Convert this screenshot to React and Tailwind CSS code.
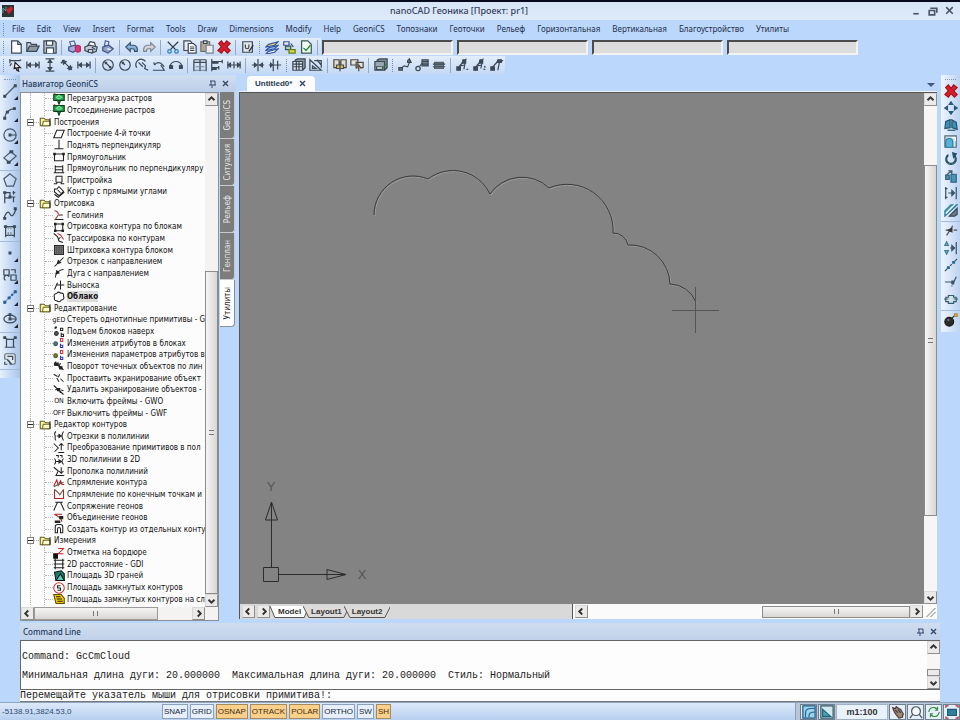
import React, { useState } from 'react';

const INK = '#3d4957';

// every glyph is a list of [path, stroke, fill] on a 16x16 grid
const GLYPHS = {
  // standard toolbar
  newFile: [['M3 1h7l4 4v10H3z', INK, '#fafcff'], ['M10 1v4h4']],
  open: [['M1 13V3h4l1 2h6v2', INK, '#cfd6dd'], ['M1 13l3-6h11l-3 6z', INK, '#8f9aa5']],
  save: [['M1 1h12l2 2v12H1z', INK, '#b9c4cf'], ['M4 1h7v5H4z', INK, '#fff'], ['M4 15V9h8v6', INK, '#fff']],
  print: [['M3 2l5-1 2 5-5 2z', '#4d68a5', '#dfe8f7'], ['M2 8l7-2 4 4-6 4-5-2z', '#3f4f8a', '#9fb2dd'], ['M10 10a3 2.500 0 1 0 5 0a3 2.500 0 1 0-5 0', '#c0275e', '#d63a72']],
  preview: [['M4 7l3-5 5 1 1 4', INK, '#fff'], ['M1 8l5-2 9 2-1 5-5 2-8-3z', INK, '#c3ccd6'], ['M5 11h5v3H5z', INK, '#fff'], ['M9 8l4 3', INK]],
  plot: [['M5 1l4 1-1 5-4-1z', '#4d68a5', '#dfe8f7'], ['M2 8l7-2 5 4-6 5-6-3z', '#45557f', '#8ea3cc'], ['M7 10l4 1', '#fff']],
  undo: [['M1 8l5-5v3h4q5 1 4 7h-3q0-3-2-3H6v3z', '#34506e', '#8db4d8']],
  redo: [['M15 8l-5-5v3H6q-5 1-4 7h3q0-3 2-3h3v3z', '#7d8791', '#d5d3d6']],
  cut: [['M2 2l9 9M14 2l-9 9', '#2f3b46'], ['M2 13a2 2 0 1 0 4 0a2 2 0 1 0-4 0M10 13a2 2 0 1 0 4 0a2 2 0 1 0-4 0', '#2b7fc0']],
  copy: [['M1 1h7l2 2v9H1z', INK, '#e8edf2'], ['M6 4h6l3 3v8H6z', INK, '#fff'], ['M8 8h5M8 10h5M8 12h5']],
  paste: [['M1 2h10v11H1z', '#6b6f73', '#b2a796'], ['M4 1h4v3H4z', INK, '#ddd'], ['M7 6h8v9H7z', '#7b8289', '#e9edf0']],
  del: [['M2 4l3-3 3 4 3-4 4 3-4 4 4 4-3 3-4-4-3 4-4-3 4-4z', '#a8101c', '#d5202c']],
  props: [['M2 2h11v12H2z', INK, '#e4e9ef'], ['M5 5v3q0 2 2 2t2-2V5'], ['M14 6l-5 7', '#222']],
  layers: [['M4 5l11-3-4 4-10 2z', '#3056a8', '#f4d94e'], ['M4 9l11-3-4 4-10 2z', '#3056a8', '#9fc0f0'], ['M4 13l11-3-4 4-10 2z', '#3056a8', '#fff']],
  layerSet: [['M2 2h6v4H2z', '#33508c', '#e8effa'], ['M4 7h6v4H4z', '#33508c', '#b8d47a'], ['M8 11h7v4H8z', '#5d7d1e', '#e6dd3d'], ['M10 4l3 4', INK]],
  checkFile: [['M3 1h7l4 4v10H3z', '#365a4a', '#f5fbf5'], ['M5 9l3 3 5-6', '#168a3a']],

  // dimension toolbar
  dimPick: [['M1 3h7M1 1v5M8 3h4l2-1M3 6l-2 3'], ['M7 5l6 6h-3l1 4-2-1-1-3-2 1z', '#222', '#fff']],
  dimLin: [['M1 4v8M15 4v8M2 8h12'], ['M2 8l3-2v4zM14 8l-3-2v4z', INK, INK]],
  dimVert: [['M3 1h10M3 15h10M8 2v12'], ['M6 5l2-3 2 3zM6 11l2 3 2-3z', INK, INK]],
  dimAlign: [['M3 3l10 10M1 6l4-4M10 14l4-4'], ['M3 3l4 1-3 3zM13 13l-4-1 3-3z', INK, INK]],
  dimDia: [['M2 8a6 6 0 1 0 12 0a6 6 0 1 0-12 0M4 4l8 8M5 7V5h2M11 9v2H9']],
  dimRad: [['M2 8a6 6 0 1 0 12 0a6 6 0 1 0-12 0M8 8l-4-4M5 7V5h2']],
  dimJog: [['M2 11a6 6 0 0 1 10-7M4 5l5 5M8 5l4 4-1 3 4 2']],
  dimAng: [['M3 8a5 5 0 0 1 9 0l2 2M1 14h13L10 8M3 8l-1-3']],
  dimArc: [['M1 12v-3q2-5 7-5t7 5v3M3 8l-2 3M12 8l3 3'], ['M1 9h3v3H1zM12 9h3v3h-3z', INK, INK]],
  dimOrd: [['M1 2v13M8 2v13M15 2v13M1 2h14M1 5h14', INK], ['M3 10h10M1 14h14', '#77828d']],
  dimBase: [['M2 1v14M2 4h12M2 11h8M14 2v4M10 9v4'], ['M3 4h6v2H3zM3 11h4v2H3z', INK, INK]],
  dimCont: [['M1 4v8M8 4v8M15 4v8M1 8h14'], ['M1 8l3-2v4zM15 8l-3-2v4z', INK, INK]],
  dimSpace: [['M8 1v14M1 8h6M9 8h6'], ['M4 6l3 2-3 2zM13 6l-3 2 3 2z', INK, INK]],
  dimBreak: [['M6 1v14M11 3v10M1 8h14'], ['M3 6l2 2-2 2z', INK, INK]],
  table: [['M3 3l3-2h9v10l-3 3', INK, '#8c97a3'], ['M1 4h11v10H1z', INK, '#dfe5eb'], ['M1 7h11M1 10h11M5 4v10M8 4v10']],
  ruler: [['M1 2v12h13z'], ['M4 9v3h4zM9 2l5 6M6 3h8v8']],
  blockIn: [['M1 2h6v9H1zM9 2h6v9H9z', '#4d4a42', '#e2ded0'], ['M4 8h8v4H4z', '#4d4a42', '#d5c370'], ['M8 4v11']],
  blockOut: [['M1 2h8v6H1zM7 5h8v6H7z', '#4d4a42', '#e6e4da'], ['M10 8v7M7 12l3-4 3 4', '#4d4a42', '#d5c370']],
  tableEdit: [['M3 3l3-2h9v10l-3 3', INK, '#7c8894'], ['M1 4h11v10H1z', INK, '#9aa6b2'], ['M3 10h7v3H3z', INK, '#e8edf2'], ['M14 7l-5 6', '#3c7c3c']],
  geoA: [['M2 13l5-4 4 1 3-7'], ['M1 11h4v3H1zM11 3l2-2 2 4h-4z', INK, '#6b7580']],
  geoB: [['M1 12a2 2 0 1 0 5 0a2 2 0 1 0-5 0M5 10l3-4'], ['M8 2h7v7H8z', INK, '#7a838d'], ['M8 4h7M8 7h7']],
  geoC: [['M3 5h10v7H3z', '#5a636d', '#737b84'], ['M1 7h14M1 10h14']],
  geoD: [['M2 13l3-5 6-6-2 11M5 9l5-1M12 13h2'], ['M1 10h4v4H1zM8 2h3v4H7z', INK, INK]],
  geoE: [['M2 13l3-5 6-6-2 10M5 9l5-1M12 13h2M13 9l1 2'], ['M1 10h4v4H1zM8 2h3v4H7z', INK, INK]],
  geoF: [['M2 13l3-5 5-5h5M11 3l-2 11'], ['M1 10h4v4H1zM9 2h4v3H8z', INK, INK]],

  // draw toolbar
  line: [['M2 14L14 2', '#4a5968'], ['M1 13h2v2H1zM13 1h2v2h-2z', INK, INK]],
  arc: [['M2 14Q3 4 13 3', '#4a5968'], ['M1 13h2v2H1zM4 6h2v2H4zM12 2h2v2h-2z', INK, INK]],
  circle: [['M1 8a7 7 0 1 0 14 0a7 7 0 1 0-14 0', '#4a5968'], ['M8 8h7M7 7h2v2H7z', INK, INK]],
  rect: [['M1 9l8-7 6 5-8 7z', '#4a5968'], ['M5 13h3v2H5zM8 1h3v2H8z', INK, INK]],
  polygon: [['M8 1l7 5.500-3 8.500H4L1 6.500z', '#4a5968']],
  pline: [['M2 15V3h6v5h6M2 9h6M11 3h3M12 1v4M12 8v6'], ['M1 2h2v2H1zM7 7h2v2H7z', INK, INK]],
  spline: [['M1 13q4-11 7-5t7-6'], ['M1 12h2v2H1zM13 1h2v2h-2z', INK, INK]],
  hatch: [['M3 3h10v10H3zM1 3h2M13 3h2M3 13v2M13 13v2', INK], ['M6 3v3M9 3v3M6 9v4M9 9v4', '#7b8793'], ['M2 2h2v2H2zM12 2h2v2h-2z', INK, INK]],
  point: [['M7 7h2v2H7z', INK, INK]],
  region: [['M1 2h6v6H1zM9 8h6v6H9zM3 14a3 3 0 1 1 4-4M9 2h5v4']],
  divide: [['M2 14L14 2', '#7fa3c8'], ['M1 13h2v2H1zM6 8h2v2H6zM13 1h2v2h-2zM10 5h1v1h-1z', '#2f5c8c', '#2f5c8c']],
  ellipse: [['M1 8a7 4.500 0 1 0 14 0a7 4.500 0 1 0-14 0M8 3v5h7'], ['M7 2h2v2H7zM7 7h2v2H7z', INK, INK]],
  wipe: [['M2 3l3 2h7l2-2M4 5v9M12 5v9M2 14h12'], ['M1 2h2v2H1zM13 2h2v2h-2z', INK, INK]],
  boundary: [['M2 4q0-2 2-2h8q2 0 2 2v8q0 2-2 2H8q0-6-6-6z', '#65727f', '#dfe7ee'], ['M5 5h6v4M2 11v3h3M5 9l5 5']],

  // modify toolbar
  move: [['M8 1l-2 3h4zM8 15l-2-3h4zM1 8l3-2v4zM15 8l-3-2v4z', '#245a78', '#245a78']],
  mirror: [['M1 12l1-8 5-2v9zM9 11V2l5 3 1 8z', '#22566e', '#3b93b5'], ['M4 14h9', '#22566e']],
  scale: [['M1 1h13v13H1z', '#5c6b78', '#cfe4ee'], ['M2 14V8q0-4 4-4t4 4v6z', '#2a81a8', '#55b4d6'], ['M9 3h4v4', '#fff']],
  rotate: [['M5 3a6 6 0 1 0 6 0', '#244c63'], ['M5 4a5 5 0 1 0 6 0', '#244c63'], ['M10 1l4 1-3 4z', '#244c63', '#244c63']],
  array: [['M2 8l5-5 4 4M5 2h4v4', '#3c5566'], ['M2 7h4v5H2zM8 6h6v9H8z', '#2c6684', '#4c93b4']],
  stretch: [['M2 1v14M14 1v14M1 3h3M1 13h3M5 8h6', '#3a5566'], ['M9 5l3 3-3 3z', '#3a5566', '#3a5566']],
  offset: [['M1 9l7-7h7L1 15z', '#2c7c9c', '#4da9c8'], ['M6 15l9-9v7l-3 2z', '#3b4a56', '#6d7d8b'], ['M2 12L13 1', '#fff']],
  trim: [['M3 13l7-11M2 7h6M11 7h4', '#47515b'], ['M5 7l4-2v4z', '#333', '#333']],
  extend: [['M14 1v14M7 8h5', '#3a5566'], ['M3 1l-2 4h4zM3 15l-2-4h4z', '#3a7f9c', '#9cc6d8'], ['M9 5l3 3-3 3z', '#3a5566', '#3a5566']],
  brk: [['M1 15l4-4M7 9l2-2M11 5l4-4', '#47515b'], ['M4 10h2v2H4zM10 4h2v2h-2z', '#2b6d92', '#2b6d92']],
  join: [['M1 8h9M10 11l4-9M9 12v1', '#3a5566'], ['M9 7h2v3H9z', '#3a5566', '#3a5566']],
  explodeBox: [['M2 6h3V4h6v2h3v5h-3v2H5v-2H2zM0 8h5M11 8h5', '#3a5f72', '#cfe2ea']],
  bomb: [['M1 10a5 5 0 1 0 10 0a5 5 0 1 0-10 0', '#1c1c1c', '#2a2a2a'], ['M9 6l3-3', '#333'], ['M12 1h3v3h-3z', '#b08a3c', '#e0b95a'], ['M4 8h2', '#bbb']],

  // tree
  raster: [['M1 2h14v8H1z', '#0c3d18', '#1f9a4b'], ['M4 6l4-3 4 3-4 2z', '#7be08f', '#3fc46a'], ['M6 10h4l-2 5z', '#0c3d18', '#1f9a4b'], ['M1 1h2', '#c33']],
  folder: [['M1 13V3h5l2 2h5v8z', '#5f5a1e', '#fdf6a8'], ['M4 13l1-6h9v6z', '#6d6824', '#fffbcc'], ['M14 3v10', '#222']],
  para: [['M1 13L5 3h10l-4 10z', '#222']],
  perp: [['M8 1v12M2 13h12', '#222']],
  rectangle: [['M2 4h12v9H2z', '#222'], ['M1 3h2v2H1zM13 3h2v2h-2z', '#222', '#222']],
  rectPerp: [['M3 3v10M13 3v10M3 5h10M1 13h14M3 9h10', '#222']],
  annex: [['M4 3h8v8M4 3v8M1 13h4v-2h6v2h4', '#222']],
  angles: [['M2 4h3l3-3 6 6-6 6-6-5zM2 11l5 4 8-7', '#222'], ['M6 5l4 4', '#222']],
  geoline: [['M2 14h12M8 8h5', '#222'], ['M2 2q6 2 5 6l-4 6', '#a33']],
  outline: [['M3 4h10v9H3z', '#222'], ['M2 3h2v2H2zM12 3h2v2h-2zM2 12h2v2H2zM12 12h2v2h-2z', '#222', '#222']],
  trace: [['M1 2l5 4 2 6 5 2M7 10l3-3', '#222'], ['M6 2l4 2 4 6', '#c33']],
  fill: [['M2 2h12v12H2z', '#222', '#888'], ['M2 5h12M2 8h12M2 11h12M5 2v12M8 2v12M11 2v12', '#555']],
  segDir: [['M2 14L14 2', '#222'], ['M6 10l1-4 3 3z', '#222', '#222']],
  arcDir: [['M3 14Q4 5 14 3', '#222'], ['M4 9l1-4 3 3z', '#222', '#222']],
  leader: [['M2 14l4-9M4 8h11M10 2v12', '#222']],
  cloud: [['M5 3q3-3 5 0 5-1 4 4 2 4-3 5-2 4-6 1-4 0-3-4-2-5 3-6z', '#222']],
  raise: [['M3 1v3M2 3l2-2 1 2', '#222'], ['M2 10a2 2 0 1 0 5 0a2 2 0 1 0-5 0', '#333', '#555'], ['M10 3h3v3h-3zM11 9v5h3v-3h-3', '#222']],
  attr: [['M1 9a2 2 0 1 0 5 0a2 2 0 1 0-5 0', '#356', '#567b6b'], ['M10 2h3v4h-3z', '#c34'], ['M10 9v5h3v-3h-3', '#33a']],
  attrP: [['M1 9a2 2 0 1 0 5 0a2 2 0 1 0-5 0', '#552', '#77812c'], ['M10 2h3v4h-3z', '#c34'], ['M10 9v5h3v-3h-3', '#33a']],
  turn: [['M4 2l-2 4 6 2 6 5M8 8l2-4', '#222'], ['M2 4h5v3H2zM8 9h4v3H9z', '#222', '#222']],
  screenOn: [['M1 3l5 3M5 8l3 5M9 3l-2 4M10 9l4 4', '#222']],
  screenOff: [['M1 2l13 12M3 8l4-2M8 6l2 6M11 8l3 1', '#222'], ['M6 6h3v3H6z', '#222', '#222']],
  segs: [['M4 2Q1 4 3 8q-1 4 1 6M14 2q-4 6 0 12M5 8h5', '#222'], ['M8 6l3 2-3 2z', '#222', '#222']],
  convert: [['M1 2l6 6-5 5M7 14h8M11 3v8M8 5l3-3 3 3', '#222']],
  to2d: [['M2 6q3 4 0 8M14 6q-4 4 0 8M4 10h7M4 2h3v3M9 2h3v3', '#222'], ['M8 8l3 2-3 2z', '#222', '#222']],
  weed: [['M1 3l6 5-3 6h11M11 3v8M8 8l3 3 3-3', '#222']],
  straight: [['M1 12l4-8 2 7 3-6 2 5h3', '#b22'], ['M1 13L14 7', '#555']],
  straight2: [['M2 2v12h12V2', '#b22'], ['M2 2l5 4 2 3 5-7', '#555']],
  mate: [['M1 14L6 3h4l5 11M3 3h3M10 3h3', '#222']],
  merge: [['M2 3h10M2 3l8 5 2 5', '#b22'], ['M9 6h4v3H9zM3 12h6v2H3z', '#222', '#222']],
  contour: [['M3 13V5q0-3 3-3h4q3 0 3 3v8h-3V8q0-2-2-2T6 8v5z', '#222']],
  mark: [['M1 9h5v6H1z', '#111', '#111'], ['M7 2h7L7 9h7', '#c22']],
  dist: [['M3 1v14M13 1v14M1 3h14M1 8h14M1 13h14', '#222']],
  faces: [['M2 3l9-2 4 4v9H4z', '#111', '#17806f'], ['M4 14l6-9 5 9z', '#111', '#4fd0c0']],
  area: [['M1 8a7 7 0 1 0 14 0a7 7 0 1 0-14 0', '#c33', '#fff'], ['M10 5H6v3h4v3H6', '#222']],
  areaLayer: [['M1 2h10l4 5v7H4z', '#5a4c05', '#f0c808'], ['M4 5h6M5 8h7M6 11h7', '#222']],

  // status bar
  viewA: [['M1 1h14v14H1z', '#1d5878', '#9fd3ec'], ['M4 14V9q0-5 6-5h5M8 14v-2q0-4 7-4', '#1d6a94']],
  viewB: [['M1 1h14v14H1z', '#2f5566', '#d3e8ee'], ['M3 13V5l9 8z', '#1f6578', '#4ba3b8']],
  hand: [['M3 6L2 3l3 1 1-2 3 2 2 1 3 5-1 4-4 1-4-5z', '#4f4038', '#9c8678'], ['M5 6l3 3M8 5l3 4', '#4f4038']],
  lens: [['M3 7a5 5 0 1 0 10 0a5 5 0 1 0-10 0M12 11l3 4M4 11l-3 4', '#4b565c', '#f4f8fa']],
  regen: [['M2 8q1-6 7-5l3 2M14 8q-1 6-7 5l-3-2M12 2v4H9M4 14v-4h3', '#3a8a4c']],
  extents: [['M3 5h10v7H3z', '#1f5c78', '#2d7f9f'], ['M1 3V1h3M12 1h3v2M1 13v2h3M12 15h3v-2', '#a33']],
};

const Glyph = ({ name, className = 'w-[14px] h-[14px]' }) => (
  <svg viewBox="0 0 16 16" className={`${className} shrink-0`} aria-hidden="true">
    {GLYPHS[name].map(([d, stroke, fill], i) => (
      <path key={i} d={d} stroke={stroke || INK} fill={fill || 'none'} strokeWidth="1.4" />
    ))}
  </svg>
);

const MENU = ['File', 'Edit', 'View', 'Insert', 'Format', 'Tools', 'Draw', 'Dimensions', 'Modify', 'Help', 'GeoniCS', 'Топознаки', 'Геоточки', 'Рельеф', 'Горизонтальная', 'Вертикальная', 'Благоустройство', 'Утилиты'];

// "|" is a separator, ":" starts the next toolbar
const STANDARD_BAR = ['newFile', 'open', 'save', '|', 'print', 'preview', 'plot', '|', 'undo', 'redo', '|', 'cut', 'copy', 'paste', 'del', '|', 'props', ':', 'layers', 'layerSet', 'checkFile', '|'];
const DIM_BAR = ['dimPick', 'dimLin', 'dimVert', 'dimAlign', 'dimLin', '|', 'dimDia', 'dimRad', 'dimJog', 'dimAng', 'dimArc', '|', 'dimOrd', 'dimBase', 'dimCont', '|', 'dimSpace', 'dimBreak', ':', 'table', 'ruler', '|', 'blockIn', 'blockOut', '|', 'tableEdit', ':', 'geoA', 'geoB', 'geoC', '|', 'geoD', 'geoE', 'geoF'];
const MODIFY_BAR = ['del', 'move', 'mirror', 'scale', 'rotate', 'array', 'stretch', 'offset', '|', 'trim', 'extend', 'brk', 'join', 'explodeBox', '|', 'bomb'];
const DRAW_BAR = [
  { flyout: true, items: ['line', 'arc', 'circle', 'rect'] },
  { flyout: false, items: ['polygon', 'pline', 'spline', 'hatch'] },
  { flyout: true, items: ['point', 'region', 'divide', 'ellipse'] },
  { flyout: false, items: ['wipe', 'boundary'] },
];

const TREE = [
  { items: [['raster', 'Перезагрузка растров'], ['raster', 'Отсоединение растров']] },
  {
    title: 'Построения',
    items: [['para', 'Построение 4-й точки'], ['perp', 'Поднять перпендикуляр'], ['rectangle', 'Прямоугольник'], ['rectPerp', 'Прямоугольник по перпендикуляру'], ['annex', 'Пристройка'], ['angles', 'Контур с прямыми углами']],
  },
  {
    title: 'Отрисовка',
    items: [['geoline', 'Геолиния'], ['outline', 'Отрисовка контура по блокам'], ['trace', 'Трассировка по контурам'], ['fill', 'Штриховка контура блоком'], ['segDir', 'Отрезок с направлением'], ['arcDir', 'Дуга с направлением'], ['leader', 'Выноска'], ['cloud', 'Облако']],
  },
  {
    title: 'Редактирование',
    items: [['gED', 'Стереть однотипные примитивы - G'], ['raise', 'Подъем блоков наверх'], ['attr', 'Изменения атрибутов в блоках'], ['attrP', 'Изменения параметров атрибутов в'], ['turn', 'Поворот точечных объектов по лин'], ['screenOn', 'Проставить экранирование объект'], ['screenOff', 'Удалить экранирование объектов -'], ['ON', 'Включить фреймы - GWO'], ['OFF', 'Выключить фреймы - GWF']],
  },
  {
    title: 'Редактор контуров',
    items: [['segs', 'Отрезки в полилинии'], ['convert', 'Преобразование примитивов в пол'], ['to2d', '3D полилинии в 2D'], ['weed', 'Прополка полилиний'], ['straight', 'Спрямление контура'], ['straight2', 'Спрямление по конечным точкам и'], ['mate', 'Сопряжение геонов'], ['merge', 'Объединение геонов'], ['contour', 'Создать контур из отдельных конту']],
  },
  {
    title: 'Измерения',
    items: [['mark', 'Отметка на бордюре'], ['dist', '2D расстояние - GDI'], ['faces', 'Площадь 3D граней'], ['area', 'Площадь замкнутых контуров'], ['areaLayer', 'Площадь замкнутых контуров на сл']],
  },
];

const NAV_TABS = ['GeoniCS', 'Ситуация', 'Рельеф', 'Генплан', 'Утилиты'];
const MODES = ['SNAP', 'GRID', 'OSNAP', 'OTRACK', 'POLAR', 'ORTHO', 'SW', 'SH'];

const ARROWS = { up: 'M2 7l4-4 4 4', down: 'M2 5l4 4 4-4', left: 'M7 2L3 6l4 4', right: 'M5 2l4 4-4 4' };

const ArrowButton = ({ dir }) => (
  <button aria-label={`Scroll ${dir}`} className="w-[13px] h-[13px] shrink-0 flex items-center justify-center bg-[#eceae8] border border-[#8f8f8f] border-t-[#d8d8d8] border-l-[#d8d8d8]">
    <svg viewBox="0 0 12 12" className="w-[9px] h-[9px]"><path d={ARROWS[dir]} fill="none" stroke="#333" strokeWidth="2.500" /></svg>
  </button>
);

const PinClose = () => (
  <div className="flex items-center gap-1">
    <button aria-label="Pin" className="w-[9px] h-[9px]">
      <svg viewBox="0 0 9 9" className="w-full h-full"><path d="M2 2h5v4M3 2v4M1 6h7M4 6v3" fill="none" stroke="#33496b" /></svg>
    </button>
    <button aria-label="Close" className="w-[9px] h-[9px]">
      <svg viewBox="0 0 9 9" className="w-full h-full"><path d="M2 2l5 5M7 2L2 7" stroke="#33496b" strokeWidth="1.400" /></svg>
    </button>
  </div>
);

const Grip = () => <span className="w-[7px] h-[13px] shrink-0 flex justify-center"><i className="border-l border-dotted border-[#6f8bb0]" /></span>;

const HBar = ({ items }) => (
  <div className="flex items-center h-[18px] bg-linear-to-b from-[#e3edfa] to-[#c4d9f5]">
    <Grip />
    {items.map((name, i) => {
      if (name === '|') return <span key={i} className="w-[7px] h-[15px] flex justify-center"><i className="w-px bg-[#93a9c6]" /></span>;
      if (name === ':') return <Grip key={i} />;
      return (
        <button key={i} aria-label={name} className="w-[17px] h-[17px] flex items-center justify-center hover:bg-[#ffe3a8]">
          <Glyph name={name} />
        </button>
      );
    })}
  </div>
);

const TitleBar = () => (
  <header className="flex items-center h-[20px] border-t-2 border-[#060a1c] bg-linear-to-b from-[#d6e5f7] to-[#dfeafa]">
    <div className="flex-1 pl-0.5">
      <svg viewBox="0 0 12 12" className="w-[12px] h-[12px]">
        <rect width="12" height="12" fill="#2c3438" />
        <path d="M1 8V3l3 3V2" stroke="#54a08c" fill="none" />
        <path d="M4 3l2 1 3-3 2 3-3 4-2 1z" fill="#d3202f" />
      </svg>
    </div>
    <h1 className="mr-10 text-[9px] leading-3 font-medium text-[#33425c] font-['Noto_Sans','Open_Sans',sans-serif]">nanoCAD Геоника [Проект: pr1]</h1>
    <div className="flex-1 flex justify-end gap-[5px] pr-1">
      {[['Minimize', 'M3 8h5'], ['Restore', 'M3 3h6v4M2 5h5v4H2z'], ['Close', 'M2 2l6 6M8 2L2 8']].map(([label, d]) => (
        <button key={label} aria-label={label} className="w-[12px] h-[12px]">
          <svg viewBox="0 0 11 11" className="w-full h-full"><path d={d} fill="none" stroke="#4b5565" strokeWidth="1.500" /></svg>
        </button>
      ))}
    </div>
  </header>
);

const DrawBar = () => (
  <aside className="w-[20px] shrink-0 self-start flex flex-col pb-2 bg-linear-to-r from-[#e6f0fc] to-[#a9c5ea]">
    <span className="h-[5px] mx-1 border-b border-dotted border-[#7f96b6]" />
    {DRAW_BAR.map((group, g) => (
      <div key={g} className="flex flex-col border-b border-[#a5bcd9] pb-0.5">
        {group.items.map((name) => (
          <button key={name} aria-label={name} className={`relative flex items-center justify-center hover:bg-[#ffe3a8] ${group.flyout ? 'h-[22px]' : 'h-[17px]'}`}>
            <Glyph name={name} />
            {group.flyout && <i className="absolute right-0.5 bottom-0.5 border-2 border-transparent border-r-[#223] border-b-[#223]" />}
          </button>
        ))}
      </div>
    ))}
  </aside>
);

const ModifyBar = () => (
  <aside className="w-[19px] shrink-0 self-start flex flex-col pb-1 bg-linear-to-r from-[#eef5fe] to-[#bdd3f0]">
    <span className="h-[5px] mx-1 mb-0.5 border-b border-dotted border-[#7f96b6]" />
    {MODIFY_BAR.map((name, i) =>
      name === '|' ? (
        <span key={i} className="h-1 border-b border-[#a5bcd9]" />
      ) : (
        <button key={i} aria-label={name} className="h-[17px] flex items-center justify-center hover:bg-[#ffe3a8]">
          <Glyph name={name} />
        </button>
      )
    )}
  </aside>
);

const TreeRow = ({ icon, label, selected, onSelect }) => (
  <li className="flex-1 min-h-0 flex items-center">
    <span className="w-2 shrink-0 border-t border-dotted border-[#b5b5b5]" />
    <button onClick={onSelect} className="flex items-center gap-0.5 whitespace-nowrap">
      {GLYPHS[icon] ? (
        <Glyph name={icon} className="w-[12px] h-[12px]" />
      ) : (
        <span className="w-[12px] text-[7px] leading-[10px] flex justify-center">{icon}</span>
      )}
      <span className={selected ? 'font-bold bg-[#dcdcdc] leading-[11px]' : 'leading-[11px]'}>{label}</span>
    </button>
  </li>
);

const Navigator = () => {
  const [selected, setSelected] = useState('Облако');
  const [tab, setTab] = useState('Утилиты');
  return (
    <section className="w-[216px] shrink-0 flex flex-col min-h-0">
      <div className="flex items-center justify-between h-[17px] pl-0.5 pr-1.5 bg-linear-to-b from-[#d0deef] to-[#bccfe9]">
        <h2 className="text-[8px] leading-3 font-medium text-[#1f3a60] font-['Noto_Sans','Open_Sans',sans-serif]">Навигатор GeoniCS</h2>
        <PinClose />
      </div>
      <div className="flex-1 flex min-h-0">
        <div className="flex-1 flex flex-col min-w-0 border border-[#8a8f96] bg-[#fcfcfc]">
          <div className="flex-1 flex min-h-0">
            <ul className="flex-1 min-w-0 min-h-0 overflow-hidden flex flex-col pb-0.5 text-[8px] text-[#111]">
              {TREE.map((group, g) => (
                <li key={g} className="flex flex-col min-h-0 ml-[9px] border-l border-dotted border-[#b5b5b5]" style={{ flexGrow: group.items.length + (group.title ? 1 : 0), flexBasis: 0 }}>
                  {group.title && (
                    <div className="flex-1 min-h-0 -ml-1 flex items-center">
                      <button aria-label={`Toggle ${group.title}`} className="w-[7px] h-[7px] shrink-0 flex items-center border border-[#808080] bg-white">
                        <i className="w-full border-t border-[#222]" />
                      </button>
                      <span className="w-[5px] shrink-0 border-t border-dotted border-[#b5b5b5]" />
                      <Glyph name="folder" className="w-[13px] h-[12px]" />
                      <span className="pl-0.5 leading-[11px] whitespace-nowrap">{group.title}</span>
                    </div>
                  )}
                  <ul className="flex flex-col min-h-0 ml-[13px] border-l border-dotted border-[#b5b5b5]" style={{ flexGrow: group.items.length, flexBasis: 0 }}>
                    {group.items.map(([icon, label]) => (
                      <TreeRow key={label} icon={icon} label={label} selected={selected === label} onSelect={() => setSelected(label)} />
                    ))}
                  </ul>
                </li>
              ))}
            </ul>
            <div className="w-[13px] shrink-0 flex flex-col bg-[#f4f3f2]">
              <ArrowButton dir="up" />
              <div className="grow-[168]" />
              <div className="grow-[321] flex items-center justify-center border border-[#8c8c8c] bg-linear-to-r from-[#f6f5f4] to-[#d9d7d4]">
                <i className="w-[5px] h-[5px] border-y border-[#777]" />
              </div>
              <ArrowButton dir="down" />
            </div>
          </div>
          <div className="flex h-[13px] shrink-0 bg-[#f4f3f2] pr-[13px]">
            <ArrowButton dir="left" />
            <div className="grow-[122] flex items-center justify-center border border-[#9a9a9a] bg-linear-to-b from-[#f6f5f4] to-[#d9d7d4]">
              <i className="w-[5px] h-[5px] border-x border-[#777]" />
            </div>
            <div className="grow-[36]" />
            <ArrowButton dir="right" />
          </div>
        </div>
        <div role="tablist" className="w-[17px] shrink-0 flex flex-col pl-px">
          {NAV_TABS.map((name) => (
            <button key={name} role="tab" aria-selected={tab === name} onClick={() => setTab(name)}
              className={`h-[47px] w-[15px] flex items-center justify-center border-b border-r rounded-br-sm text-[8px] leading-[11px] ${
                tab === name ? 'bg-white text-[#222] border-[#8a8f96]' : 'bg-[#7c7c7c] text-[#e6e6e6] border-[#c9c9c9]'
              }`}>
              <span className="[writing-mode:vertical-rl] rotate-180">{name}</span>
            </button>
          ))}
        </div>
      </div>
    </section>
  );
};

const Drawing = () => (
  <svg className="absolute inset-0 w-full h-full" fill="none" stroke="#3a3a3a" aria-label="Drawing">
    <g transform="translate(-240 -93)">
      <path d="M374 215A39 39 0 0 1 428 179A41 41 0 0 1 490 194A39 39 0 0 1 549 188A46 46 0 0 1 613 233A15 15 0 0 1 628 245A40 40 0 0 1 670 284A29 29 0 0 1 696 302" stroke="#b4b4b4" transform="translate(1 1)" opacity=".5" />
      <path d="M374 215A39 39 0 0 1 428 179A41 41 0 0 1 490 194A39 39 0 0 1 549 188A46 46 0 0 1 613 233A15 15 0 0 1 628 245A40 40 0 0 1 670 284A29 29 0 0 1 696 302" />
      <path d="M672 310.500h47M695.500 287v46" stroke="#555" />
      <path d="M263.500 567.500h15v14h-15zM271.500 567v-65l-6 18h12l-6-18M279 574.500h67l-19-5v10l19-5" stroke="#2c2c2c" />
      <g fill="#565656" stroke="none" fontSize="13" textAnchor="middle" fontFamily="Liberation Sans">
        <text x="271" y="491">Y</text>
        <text x="362" y="579">X</text>
      </g>
    </g>
  </svg>
);

const Sheets = () => {
  const [sheet, setSheet] = useState('Model');
  return (
    <div className="flex -space-x-1.5">
      {['Model', 'Layout1', 'Layout2'].map((name) => (
        <button key={name} onClick={() => setSheet(name)} className="relative h-[12px] px-2 font-['Liberation_Sans',Arial,sans-serif] text-[8px] leading-[12px] font-bold text-[#333]">
          <svg viewBox="0 0 40 12" preserveAspectRatio="none" className="absolute inset-0 w-full h-full">
            <path d="M0 0l5 11.500h30L40 0" fill={sheet === name ? '#fff' : '#dedcda'} stroke="#555" vectorEffect="non-scaling-stroke" />
          </svg>
          <span className="relative">{name}</span>
        </button>
      ))}
    </div>
  );
};

const DocumentArea = () => (
  <section className="flex-1 min-w-0 flex flex-col">
    <div className="flex items-end justify-between h-[17px] pr-0.5 border-b border-[#edf4fd]">
      <div className="flex items-center gap-1.5 h-[15px] ml-2 px-2 bg-[#fafcff] rounded-t-sm font-['Liberation_Sans',Arial,sans-serif] text-[8px] leading-3 font-bold text-[#2b3a52]">
        Untitled0*
        <button aria-label="Close document" className="w-[9px] h-[9px]">
          <svg viewBox="0 0 9 9" className="w-full h-full"><path d="M2 2l5 5M7 2L2 7" stroke="#33496b" strokeWidth="1.400" /></svg>
        </button>
      </div>
      <button aria-label="Documents" className="h-[12px]">
        <svg viewBox="0 0 8 5" className="w-[8px] h-[5px]"><path d="M0 0h8L4 4z" fill="#3f5c80" /></svg>
      </button>
    </div>
    <div className="flex-1 flex min-h-0 border-t border-l border-[#555]">
      <div className="relative flex-1 bg-[#838383] cursor-crosshair"><Drawing /></div>
      <div className="w-[13px] shrink-0 flex flex-col bg-[#f7f6f5]">
        <ArrowButton dir="up" />
        <div className="grow-[60]" />
        <div className="grow-[350] flex items-center justify-center border border-[#8c8c8c] bg-linear-to-r from-[#f6f5f4] to-[#d9d7d4]">
          <i className="w-[5px] h-[5px] border-y border-[#777]" />
        </div>
        <div className="grow-[76]" />
        <ArrowButton dir="down" />
      </div>
    </div>
    <div className="flex items-center h-[15px] border-l border-[#555] bg-[#d9d9d9]">
      <div className="flex gap-0.5 pl-0.5"><ArrowButton dir="left" /><ArrowButton dir="right" /></div>
      <Sheets />
      <div className="flex-1" />
      <div className="w-[365px] flex h-full items-center pl-0.5 border-l border-[#555] bg-[#fbfbfb]">
        <ArrowButton dir="left" />
        <div className="grow-[178]" />
        <div className="grow-[144] h-[12px] flex items-center justify-center border border-[#8c8c8c] bg-linear-to-b from-[#f6f5f4] to-[#d9d7d4]">
          <i className="w-[5px] h-[5px] border-x border-[#777]" />
        </div>
        <ArrowButton dir="right" />
        <svg viewBox="0 0 13 13" className="w-[14px] h-[13px] shrink-0"><path d="M3 12l9-9M7 12l5-5" stroke="#777" /></svg>
      </div>
    </div>
  </section>
);

const CommandLine = () => (
  <section className="ml-5 mr-5 shrink-0">
    <div className="flex items-center justify-between h-[17px] pl-[3px] pr-0.5 bg-linear-to-b from-[#d0ddee] to-[#c0d2ea]">
      <h2 className="text-[8px] leading-3 font-medium text-[#1f3a60] font-['Noto_Sans','Open_Sans',sans-serif]">Command Line</h2>
      <PinClose />
    </div>
    <div className="flex h-[50px] border-t border-l border-b border-[#666] bg-[#fdfdfd]">
      <div className="flex-1 flex flex-col justify-end gap-[7px] pb-[7px] pl-px font-['Liberation_Mono','Courier_New',monospace] text-[10px] leading-3 text-[#1c1c1c] whitespace-pre">
        <p>Command: GcCmCloud</p>
        <p>Минимальная длина дуги: 20.000000  Максимальная длина дуги: 20.000000  Стиль: Нормальный</p>
      </div>
      <div className="w-[13px] shrink-0 flex flex-col bg-[#f7f6f5]">
        <ArrowButton dir="up" />
        <div className="flex-1" />
        <div className="h-[7px] border border-[#8c8c8c] bg-[#eceae8]" />
        <ArrowButton dir="down" />
      </div>
    </div>
    <input aria-label="Command" defaultValue="Перемещайте указатель мыши для отрисовки примитива!:" className="block w-full h-[12px] bg-[#fdfdfd] border-b border-[#777] font-['Liberation_Mono','Courier_New',monospace] text-[10px] leading-[11px] text-[#1c1c1c] outline-none" />
  </section>
);

const StatusBar = () => {
  const [active, setActive] = useState(['OSNAP', 'OTRACK', 'POLAR', 'SH']);
  const toggle = (m) => setActive(active.includes(m) ? active.filter((a) => a !== m) : [...active, m]);
  return (
    <footer className="flex items-center h-[18px] shrink-0 border-t border-[#8fa6c4] bg-linear-to-b from-[#dce9f9] to-[#b7d0f0] font-['Liberation_Sans',Arial,sans-serif]">
      <span className="w-[162px] pl-0.5 text-[8px] leading-3 text-[#2d4a70]">-5138.91,3824.53,0</span>
      <div className="flex gap-0.5">
        {MODES.map((m) => (
          <button key={m} aria-pressed={active.includes(m)} onClick={() => toggle(m)}
            className={`h-[15px] px-px border text-[8px] leading-3 ${
              active.includes(m) ? 'bg-[#fbd08a] border-[#a88a5a] text-[#3f2f12]' : 'bg-[#e6effb] border-[#8ba0bd] text-[#222c3b]'
            }`}>
            {m}
          </button>
        ))}
      </div>
      <div className="flex-1" />
      <div className="flex items-center gap-px h-full pl-1 border-l border-[#8ba0bd] bg-[#b9c6d6]">
        {['viewA', 'viewB'].map((name) => (
          <button key={name} aria-label={name} className="w-[17px] h-[16px] flex items-center justify-center border border-[#6f7f92] bg-[#dfe9f4]"><Glyph name={name} /></button>
        ))}
        <button className="w-[52px] h-[16px] bg-[#e9f1fb] border border-[#9fb1c9] text-[9px] leading-3 font-bold text-[#333]">m1:100</button>
        {['hand', 'lens', 'regen', 'extents'].map((name) => (
          <button key={name} aria-label={name} className="w-[17px] h-[16px] flex items-center justify-center border border-[#6f7f92] bg-[#e6eef7]"><Glyph name={name} /></button>
        ))}
      </div>
    </footer>
  );
};

export default function App() {
  return (
    <div className="h-screen min-h-[480px] flex flex-col overflow-hidden bg-[#bcd7fc] font-['DejaVu_Sans_Condensed','DejaVu_Sans',sans-serif]">
      <TitleBar />
      <nav className="flex items-center h-[18px] pr-3 text-[8px] leading-3 text-[#1f3049] whitespace-nowrap font-['Noto_Sans','Open_Sans',sans-serif]">
        <Grip />
        <div className="flex pl-[5px] gap-3">
          {MENU.map((name) => <button key={name}>{name}</button>)}
        </div>
      </nav>
      <div className="flex items-center">
        <HBar items={STANDARD_BAR} />
        <div className="flex gap-1 pl-px">
          {['Layer', 'Color', 'Linetype', 'Lineweight'].map((name) => (
            <select key={name} aria-label={name} disabled className="appearance-none w-[131px] h-[15px] bg-[#dcdcdc] border-2 border-t-[#4c4c4c] border-l-[#4c4c4c] border-r-[#f2f2f2] border-b-[#f2f2f2]" />
          ))}
        </div>
      </div>
      <div className="flex pb-px">
        <HBar items={DIM_BAR} />
      </div>
      <main className="flex-1 flex min-h-0 pb-0.5">
        <DrawBar />
        <Navigator />
        <div className="flex-1 min-w-0 flex pl-[3px] pr-1 pb-0.5"><DocumentArea /></div>
        <ModifyBar />
      </main>
      <CommandLine />
      <StatusBar />
    </div>
  );
}
